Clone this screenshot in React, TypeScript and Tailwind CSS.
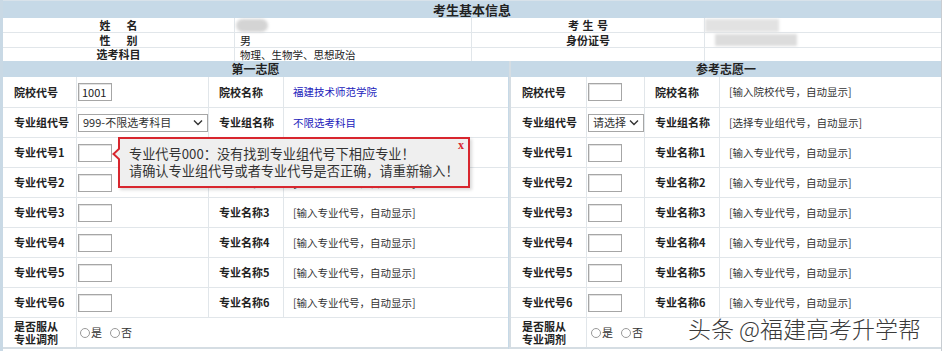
import React from "react";

const font = { fontFamily: '"Noto Sans CJK SC", "Noto Sans", sans-serif' };

function Box({ value }: { value?: string }) {
  return (
    <div className="flex h-[18px] w-[34px] items-center border border-[#a6a6a6] bg-white px-[3px] text-[11px] text-[#222] shadow-[inset_1px_1px_0_#e2e2e2]">
      {value}
    </div>
  );
}

function Select({ text, w }: { text: string; w: string }) {
  return (
    <div className={`flex h-[18px] ${w} items-center justify-between border border-[#a6a6a6] bg-white pl-[4px] pr-[4px] text-[11px] text-[#333]`}>
      <span>{text}</span>
      <svg width="10" height="7" viewBox="0 0 10 7">
        <path d="M1 1.5 L5 5.5 L9 1.5" fill="none" stroke="#333" strokeWidth="1.4" />
      </svg>
    </div>
  );
}

function Label({ children }: { children: React.ReactNode }) {
  return <span className="text-[11px] font-bold leading-[13px] text-[#222]">{children}</span>;
}

// spaced label like "姓  名"
function Spread({ chars, w }: { chars: string[]; w: string }) {
  return (
    <span className={`flex ${w} justify-between text-[11px] font-bold leading-[13px] text-[#222]`}>
      {chars.map((c) => (
        <span key={c}>{c}</span>
      ))}
    </span>
  );
}

const hint = "[输入专业代号，自动显示]";

type Row = { l1: React.ReactNode; c1: React.ReactNode; l2: string; c2: React.ReactNode };

function Panel({ title, rows, cols, radioPad }: { title: string; rows: Row[]; cols: string; radioPad: string }) {
  return (
    <div className="flex flex-col">
      <div className="flex h-[16px] items-center justify-center bg-[#c6d9e7] text-[12px] font-bold text-[#222]">
        {title}
      </div>
      {rows.map((r, i) => (
        <div
          key={i}
          className={`grid ${cols} ${i === 0 ? "h-[31px]" : "h-[30px]"} border-b border-[#e1e6ea]`}
        >
          <div className="flex items-center border-r border-[#e1e6ea] pl-[11px]">
            <Label>{r.l1}</Label>
          </div>
          <div className="flex items-center border-r border-[#e1e6ea] pl-[1px]">{r.c1}</div>
          <div className="flex items-center border-r border-[#e1e6ea] pl-[10px]">
            <Label>{r.l2}</Label>
          </div>
          <div className="flex items-center pl-[9px] text-[10.5px] text-[#333]">{r.c2}</div>
        </div>
      ))}
      <div className={`grid ${cols} h-[31px] border-b-2 border-[#d5dde3]`}>
        <div className="flex flex-col justify-center border-r border-[#e1e6ea] pl-[11px]">
          <Label>是否服从</Label>
          <Label>专业调剂</Label>
        </div>
        <div className={`col-span-3 flex items-center gap-[8px] ${radioPad} text-[11px] text-[#333]`}>
          <span className="flex items-center gap-[1px]">
            <span className="h-[10px] w-[10px] rounded-full border border-[#999] bg-white" />是
          </span>
          <span className="flex items-center gap-[1px]">
            <span className="h-[10px] w-[10px] rounded-full border border-[#999] bg-white" />否
          </span>
        </div>
      </div>
    </div>
  );
}

export default function App() {
  const leftRows: Row[] = [
    { l1: "院校代号", c1: <Box value="1001" />, l2: "院校名称", c2: <span className="text-[#2222bb]">福建技术师范学院</span> },
    { l1: "专业组代号", c1: <Select text="999-不限选考科目" w="w-[131px]" />, l2: "专业组名称", c2: <span className="text-[#2222bb]">不限选考科目</span> },
    ...[1, 2, 3, 4, 5, 6].map((n) => ({ l1: `专业代号${n}`, c1: <Box />, l2: `专业名称${n}`, c2: hint })),
  ];
  const rightRows: Row[] = [
    { l1: "院校代号", c1: <Box />, l2: "院校名称", c2: "[输入院校代号，自动显示]" },
    { l1: "专业组代号", c1: <Select text="请选择" w="w-[56px]" />, l2: "专业组名称", c2: "[选择专业组代号，自动显示]" },
    ...[1, 2, 3, 4, 5, 6].map((n) => ({ l1: `专业代号${n}`, c1: <Box />, l2: `专业名称${n}`, c2: hint })),
  ];

  return (
    <div className="relative h-[351px] w-[944px] overflow-hidden bg-white" style={font}>
      <div className="flex h-[351px] w-[942px] flex-col border-l-[3px] border-r border-l-[#c9d9e5] border-r-[#c8cdd2]">
        <div className="flex h-[18px] items-center justify-center border-t border-[#d8e2ea] bg-[#c6d9e7] text-[13px] font-bold text-[#222]">
          考生基本信息
        </div>
        <div className="grid h-[43px] grid-cols-[232px_237px_233px_1fr] grid-rows-[15px_15px_13px] text-[11px]">
          <div className="flex items-center justify-center border-b border-r border-[#e1e6ea]"><Spread chars={["姓", "名"]} w="w-[38px]" /></div>
          <div className="flex items-center border-b border-r border-[#e1e6ea] pl-[1px]">
            <span className="h-[13px] w-[32px] rounded-full bg-[#d4d4d4] blur-[1.5px]" />
          </div>
          <div className="flex items-center justify-center border-b border-r border-[#e1e6ea]"><Spread chars={["考", "生", "号"]} w="w-[40px]" /></div>
          <div className="flex items-center border-b border-[#e1e6ea]">
            <span className="h-[13px] w-[74px] bg-[#e2e2e2] blur-[1.5px]" />
          </div>
          <div className="flex items-center justify-center border-b border-r border-[#e1e6ea]"><Spread chars={["性", "别"]} w="w-[38px]" /></div>
          <div className="flex items-center border-b border-r border-[#e1e6ea] pl-[5px] text-[#222]">男</div>
          <div className="flex items-center justify-center border-b border-r border-[#e1e6ea]"><Label>身份证号</Label></div>
          <div className="flex items-center border-b border-[#e1e6ea] pl-[10px]">
            <span className="h-[12px] w-[82px] bg-[#dcdcdc] blur-[1.5px]" />
          </div>
          <div className="flex items-center justify-center border-r border-[#e1e6ea]"><Label>选考科目</Label></div>
          <div className="flex items-center border-r border-[#e1e6ea] pl-[5px] text-[10.5px] text-[#222]">物理、生物学、思想政治</div>
          <div className="border-r border-[#e1e6ea]" />
          <div />
        </div>
        <div className="grid grid-cols-[505px_1fr] gap-[1px] bg-[#c6d9e7]">
          <div className="bg-white">
            <Panel title="第一志愿" rows={leftRows} cols="grid-cols-[74px_132px_75px_1fr]" radioPad="pl-[3px]" />
          </div>
          <div className="border-l-2 border-[#d5dde3] bg-white">
            <Panel title="参考志愿一" rows={rightRows} cols="grid-cols-[76px_58px_75px_1fr]" radioPad="pl-[4px]" />
          </div>
        </div>
      </div>

      {/* error tooltip */}
      <div className="absolute left-[118px] top-[137px] h-[51px] w-[352px] border-2 border-[#d8262e] bg-[#efefef] pl-[9px] pt-[6px] text-[13.2px] leading-[17px] text-[#333] shadow-[2px_2px_3px_rgba(0,0,0,0.15)]">
        <div>专业代号000：没有找到专业组代号下相应专业！</div>
        <div>请确认专业组代号或者专业代号是否正确，请重新输入！</div>
        <span className="absolute right-[4px] top-[-2px] text-[12px] font-bold text-[#d8262e]" style={{ fontFamily: '"Liberation Serif", serif' }}>x</span>
        <svg className="absolute left-[-8px] top-[9px]" width="8" height="12" viewBox="0 0 8 12">
          <path d="M8 0 L1.5 6 L8 12" fill="#efefef" stroke="#d8262e" strokeWidth="2" />
        </svg>
      </div>

      {/* watermark */}
      <div
        className="absolute left-[688px] top-[314px] text-[23px] font-light leading-[28px] text-[#3a3a3a]"
        style={{ textShadow: "0 0 1px #fff, 0 0 2px #fff" }}
      >
        头条 @福建高考升学帮
      </div>
    </div>
  );
}
